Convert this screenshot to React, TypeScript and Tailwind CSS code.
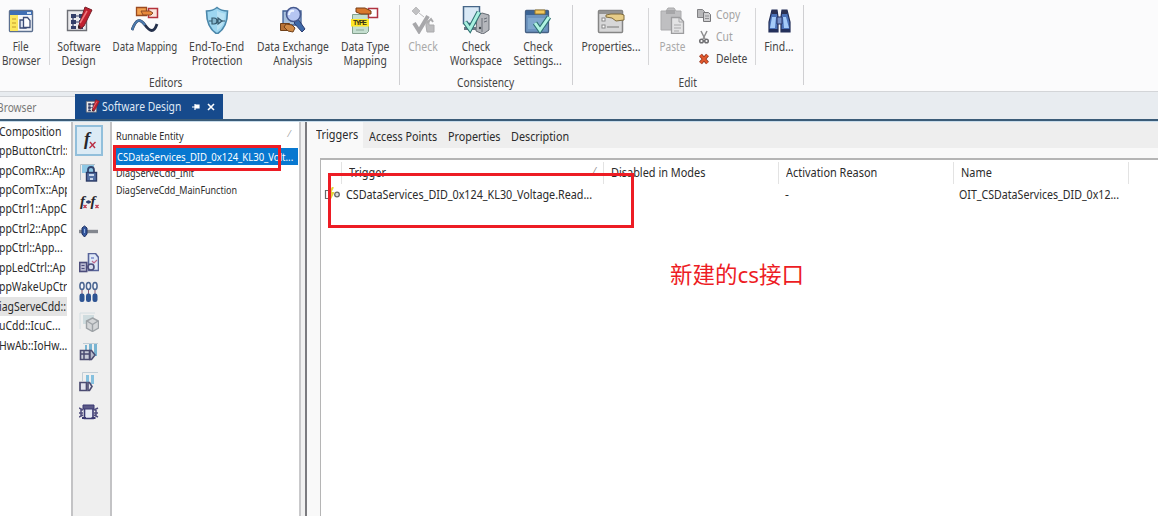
import type { ReactNode } from "react";

function Svg({ children, size = 28 }: { children: ReactNode; size?: number }) {
  return (
    <svg width={size} height={size} viewBox={`0 0 ${size} ${size}`} fill="none" className="block shrink-0">
      {children}
    </svg>
  );
}

/* ---------- ribbon icons ---------- */

const FileBrowserIcon = () => (
  <Svg>
    <rect x="2.500" y="4.500" width="23" height="21" rx="1" fill="#f4f6fa" stroke="#5b6f8f" strokeWidth="1.400" />
    <rect x="3" y="5" width="22" height="4" fill="#3f6fb4" />
    <rect x="20" y="6" width="4" height="2" fill="#cfe0f5" />
    <rect x="3" y="9" width="8" height="16" fill="#fbe75f" />
    <path d="M5 13h4M5 17h4M5 21h4" stroke="#c29a2a" strokeWidth="1.200" />
    <path d="M13 14h6v8h-6z" fill="#dfe6f3" stroke="#3c4d78" strokeWidth="1.300" />
    <path d="M16.500 11.500h4l2.500 3v7h-6.500z" fill="#fff" stroke="#3c4d78" strokeWidth="1.300" />
  </Svg>
);

const SoftwareDesignIcon = ({ small = false }: { small?: boolean }) => (
  <svg width={small ? 15 : 28} height={small ? 15 : 28} viewBox="0 0 28 28" className="block shrink-0">
    <path d="M2.500 4.500h19v20h-19z" fill="#e9e9ec" stroke="#6d6f76" strokeWidth="1.400" />
    <path d="M6 8h5v4H6zM14 8h4v4h-4zM6 14h5v4H6zM14 14h4v4h-4zM6 20h5v3H6zM14 20h4v3h-4z" fill="#323e68" />
    <path d="M11 10h4M11 16h4M8 12v9M16 12v9" stroke="#323e68" strokeWidth="1.200" />
    <path d="M20 1l7 3-8 16-4 3-1-4z" fill="#c1202f" stroke="#77202a" />
    <path d="M22 5l-7 12" stroke="#f07a7f" strokeWidth="1.500" />
    <path d="M13 19l3 2-3 2z" fill="#3a2020" />
  </svg>
);

const DataMappingIcon = () => (
  <Svg>
    <path d="M5.500 1.500h10v8h-10z" fill="#f3a14f" stroke="#9b4a1f" strokeWidth="1.300" />
    <path d="M17.500 2.500h9v9h-9z" fill="#fbe5dc" stroke="#b4323c" strokeWidth="1.500" />
    <path d="M10 5h9l3 2-2 2h-8z" fill="#e7883c" stroke="#8c4a26" />
    <path d="M1 24C5 13 9 12 14 19s9 8 12-1" stroke="#24304b" strokeWidth="2.800" />
    <path d="M1 24C5 13 9 12 14 19" stroke="#4b79ac" strokeWidth="2.200" />
  </Svg>
);

const ShieldIcon = () => (
  <Svg>
    <path d="M14 1.500c3 2.500 7 3.500 10.500 3.500 0 10-2 18-10.500 23C5.500 23 3.500 15 3.500 5 7 5 11 4 14 1.500z" fill="#9dd6f0" stroke="#4b87aa" strokeWidth="1.600" />
    <path d="M14 4.500c2.500 1.800 5 2.700 8 3-.3 8-2.500 13.500-8 17z" fill="#b9e2f4" />
    <path d="M6 15h3M19 15h3" stroke="#35596d" />
    <path d="M9 12h2a3 3 0 010 6H9zM15 12l4 3-4 3z" fill="#86b8cf" stroke="#35596d" strokeWidth="1.200" />
  </Svg>
);

const DataExchangeIcon = () => (
  <Svg>
    <path d="M4 5h18v14H4z" fill="#a9c1dc" stroke="#3f5f94" strokeWidth="1.300" />
    <path d="M19 13l7 10-3 3-8-9z" fill="#3e69a8" stroke="#2c3c70" />
    <circle cx="14.500" cy="8.500" r="7" fill="#b6c6f2" stroke="#46598f" strokeWidth="1.600" />
    <path d="M10 9c0-3 2-5 5-4" stroke="#edf4ff" strokeWidth="2" />
    <path d="M1.500 17.500h9v7h-9z" fill="#b87236" stroke="#704019" />
    <path d="M7 18l6 1 3 3-2 4-5-1-4-4z" fill="#d18a45" stroke="#704019" />
  </Svg>
);

const DataTypeIcon = () => (
  <Svg>
    <path d="M1.500 8.500h16v17l-2 2h-14z" fill="#c5dfd0" stroke="#83a08d" />
    <path d="M17.500 2.500h9v9h-9z" fill="#fff" stroke="#b03341" strokeWidth="1.500" />
    <path d="M5 2h9l6 3v3h-10L5 6z" fill="#d9782c" stroke="#773d17" />
    <rect x="0" y="13" width="18" height="7.500" fill="#ffe827" />
    <text x="2" y="19.200" textLength="14" fontFamily="Liberation Sans" fontWeight="700" fontSize="7" fill="#3a3413">TYPE</text>
    <path d="M5 24h8" stroke="#8ba897" />
  </Svg>
);

const CheckIcon = () => (
  <Svg>
    <path d="M7 1l4 4-4 4-4-4zM10 7l5 4" fill="#c1c1c3" stroke="#bcbcbe" />
    <path d="M5 17l5 8 9-15" stroke="#a7a7aa" strokeWidth="4" />
    <path d="M17 20v-5h3v4h5v7h-7z" fill="#bcbcbe" stroke="#aaaaac" />
    <path d="M18 17l4-4 2 3" stroke="#ababad" strokeWidth="2" />
  </Svg>
);

const CheckWorkspaceIcon = () => (
  <Svg>
    <path d="M1.500 .500h16v17h-16z" fill="#d9e9f6" stroke="#466688" strokeWidth="1.500" />
    <path d="M2 21h12v3H2z" fill="#6d7785" />
    <path d="M15 10l5-3 7 2v15l-6 4-7-3z" fill="#b4b7bc" stroke="#676c74" />
    <path d="M20 12v14M22 13l3-1M22 16l3-1" stroke="#6a7079" />
    <circle cx="18" cy="22" r="1.200" fill="#43494f" />
    <path d="M3 16l5 7L17 6" stroke="#2d6f71" strokeWidth="5" />
    <path d="M3 16l5 7L17 6" stroke="#a8f0df" strokeWidth="3" />
  </Svg>
);

const CheckSettingsIcon = () => (
  <Svg>
    <rect x="1.500" y="4.500" width="23" height="22" rx="1" fill="#6d94c0" stroke="#466083" strokeWidth="1.300" />
    <path d="M2 5h22v4H2z" fill="#3b6495" />
    <path d="M11 4h10v4H11z" fill="#f1c75f" stroke="#96782f" />
    <path d="M4 12h17v11H4z" fill="#7fa8ce" />
    <path d="M11 17l5 7L25 11" stroke="#2d7272" strokeWidth="5" />
    <path d="M11 17l5 7L25 11" stroke="#b0f3e1" strokeWidth="3" />
  </Svg>
);

const PropertiesIcon = () => (
  <Svg>
    <rect x="1.500" y="4.500" width="24" height="22" rx="1" fill="#d7d7d8" stroke="#858585" strokeWidth="1.500" />
    <path d="M2 5h23v3H2z" fill="#939393" />
    <rect x="5" y="12" width="3" height="3" fill="#fff" stroke="#888" />
    <rect x="5" y="19" width="3" height="3" fill="#fff" stroke="#888" />
    <path d="M10 21h12" stroke="#999" strokeWidth="1.500" />
    <path d="M9 9l5-1h10l3 1v5l-8 1-4-3-6-1z" fill="#e7cd88" stroke="#7e6b3d" />
  </Svg>
);

const PasteIcon = () => (
  <Svg>
    <path d="M3 5h5l2-3h6l2 3h5v19H3z" fill="#bfbfc1" stroke="#ababad" strokeLinejoin="round" />
    <path d="M8 4h9v4H8z" fill="#a6a6a8" />
    <path d="M13.500 11.500h8l4 4v12h-12z" fill="#e3e3e4" stroke="#9d9d9f" strokeWidth="1.300" />
    <path d="M21 12v4h4M16 19h7M16 22h7M16 25h5" stroke="#a9a9ab" />
  </Svg>
);

const FindIcon = () => (
  <Svg>
    <path d="M7 4h5l1 7v15H4V16zM17 4h5l3 12v10h-9V11z" fill="#4a71b8" stroke="#222d56" strokeWidth="1.200" />
    <path d="M12 11h5v7h-5z" fill="#7891c8" stroke="#283566" />
    <path d="M7 4h5v4H7zM17 4h5v4h-5z" fill="#2b3153" />
    <path d="M7 11l-2 11h5l1-11zM18 11l1 11h5l-3-11z" fill="#a5cbf8" />
    <path d="M4 23h9v3H4zM16 23h9v3h-9z" fill="#24305b" />
  </Svg>
);

const CopyIcon = () => (
  <Svg size={14}>
    <path d="M.500 1.500h5l2 2v6h-7z" fill="#b8b8ba" stroke="#818184" />
    <path d="M6.500 4.500h5l2 2v7h-7z" fill="#d0d0d2" stroke="#77777a" />
    <path d="M8 8h4M8 10.500h4" stroke="#909093" />
  </Svg>
);

const CutIcon = () => (
  <Svg size={14}>
    <path d="M4 1l4 8M10 1L6 9" stroke="#8e8e90" strokeWidth="1.500" />
    <circle cx="4.500" cy="11" r="1.800" stroke="#6f6f72" strokeWidth="1.500" />
    <circle cx="9.500" cy="11" r="1.800" stroke="#6f6f72" strokeWidth="1.500" />
  </Svg>
);

const DeleteIcon = () => (
  <Svg size={14}>
    <path d="M3.500 3l7 8M10.500 3l-7 8" stroke="#8d3520" strokeWidth="3.800" />
    <path d="M3.500 3l7 8M10.500 3l-7 8" stroke="#e2592d" strokeWidth="2.200" />
  </Svg>
);

/* ---------- side toolbar icons ---------- */

const FxIcon = () => (
  <Svg size={20}>
    <text x="5" y="14" fontFamily="Liberation Serif" fontStyle="italic" fontWeight="700" fontSize="18" fill="#26262c">f</text>
    <path d="M11 11l5 6M16.500 11l-6 6" stroke="#b92e43" strokeWidth="1.400" />
  </Svg>
);

const LockIcon = () => (
  <Svg size={20}>
    <path d="M1.500 17V1.500H16" stroke="#b4c0c8" />
    <path d="M3 2h12v8H3z" fill="#8ec8e5" />
    <path d="M9 10V7a3 3 0 016 0v3" stroke="#34456f" strokeWidth="1.800" />
    <rect x="7.500" y="9.500" width="10" height="8.500" fill="#5471a4" stroke="#2c3b66" strokeWidth="1.400" />
    <path d="M10 11h5v2h-5zM11 15h3v2h-3z" fill="#c9d7ec" />
  </Svg>
);

const FxFxIcon = () => (
  <Svg size={20}>
    <g fontFamily="Liberation Serif" fontStyle="italic" fontWeight="700" fontSize="15" fill="#26262c">
      <text x="1" y="13">f</text>
      <text x="11.500" y="13">f</text>
    </g>
    <path d="M4.500 12l3 3M7.500 12l-3 3M16.500 12l3 3M19.500 12l-3 3" stroke="#b92e43" strokeWidth="1.200" />
    <path d="M7 9h5" stroke="#30416f" strokeWidth="1.500" />
    <circle cx="9.500" cy="9" r="1.800" fill="#30416f" />
  </Svg>
);

const SliderIcon = () => (
  <Svg size={20}>
    <path d="M0 8.500h19" stroke="#83878f" strokeWidth="3.400" />
    <path d="M3 5l2.500-2L8 5v6l-2.500 3L3 11z" fill="#3559a0" stroke="#1c2e61" />
    <path d="M5.500 6v4" stroke="#93b0e0" />
  </Svg>
);

const PortDocIcon = () => (
  <Svg size={20}>
    <path d="M9.500.500h7l3 4v13h-10z" fill="#dfe8f7" stroke="#58649a" strokeWidth="1.600" />
    <path d="M12 5h3" stroke="#7c8ccc" strokeWidth="1.500" />
    <path d="M13 8l2 2 3-3" stroke="#c06a8c" strokeWidth="1.200" />
    <rect x=".700" y="9.500" width="7" height="9" fill="#b9b9d0" stroke="#4c4d7b" strokeWidth="1.600" />
    <path d="M2.500 12.500h3M2.500 15.500h3" stroke="#4c4d7b" />
    <circle cx="12" cy="14" r="3" fill="#d8ddec" stroke="#4c4d7b" strokeWidth="1.600" />
    <path d="M7 14h2" stroke="#4c4d7b" />
  </Svg>
);

const PinsIcon = () => (
  <svg width="20" height="24" viewBox="0 0 20 24" fill="none" className="block shrink-0">
    <g stroke="#4a6590" strokeWidth="1.500" fill="#f2f5fa">
      <ellipse cx="3" cy="5" rx="2.100" ry="3.600" />
      <ellipse cx="9.500" cy="5" rx="2.100" ry="3.600" />
      <ellipse cx="16" cy="5" rx="2.100" ry="3.600" />
    </g>
    <path d="M3 9v5M9.500 9v5M16 9v5" stroke="#8d5873" />
    <g fill="#2e5493">
      <rect x=".500" y="12.500" width="5" height="8.500" rx="2.200" />
      <rect x="7" y="12.500" width="5" height="8.500" rx="2.200" />
      <rect x="13.500" y="12.500" width="5" height="8.500" rx="2.200" />
    </g>
  </svg>
);

const CubeIcon = () => (
  <Svg size={20}>
    <path d="M1 17V1h15" stroke="#d4dee2" />
    <path d="M4 3h11v9H4z" fill="#cfdcdf" />
    <path d="M13.500 6l6 3v7l-6 3.500-6-3.500V9z" fill="#d4d6d8" stroke="#9da2a6" strokeWidth="1.400" />
    <path d="M8 9l5.500 3.500L19 9M13.500 12.500V19" stroke="#9da2a6" strokeWidth="1.400" />
  </Svg>
);

const PortsAIcon = () => (
  <Svg size={20}>
    <path d="M4 1.500h15" stroke="#c2cdd5" />
    <path d="M6 3h2v8H6zM10 2h3v9h-3zM15 2h3v12h-3z" fill="#79b4d2" />
    <path d="M1.500 8.500h9v9h-9z" fill="#c9cbd8" stroke="#4b4b71" strokeWidth="1.600" />
    <path d="M5 9v8M2 12h8M11 8.500h1.500l3.500 4.500-3.500 4.500H11z" fill="#b9bccd" stroke="#4b4b71" strokeWidth="1.500" />
  </Svg>
);

const PortsBIcon = () => (
  <Svg size={20}>
    <path d="M3.500 9V.500H19" stroke="#c2cdd5" />
    <path d="M7 3h3v7H7zM12 3h3v9h-3z" fill="#85c0de" />
    <path d="M1 10.500h6.500v8H1z" fill="#e2e2ec" stroke="#4b4b71" strokeWidth="1.700" />
    <path d="M9 10.500h1.500l2.500 4-2.500 4H9z" fill="#e5e6ee" stroke="#4b4b71" strokeWidth="1.600" />
  </Svg>
);

const ChipIcon = () => (
  <Svg size={20}>
    <path d="M0 6l4 2M0 11h4M0 15l4-2M19 6l-4 2M19 11h-4M19 15l-4-2M2 7v8M17 7v8" stroke="#504d7e" strokeWidth="1.500" />
    <path d="M5.500 4.500h8.500v12h-8.500z" fill="#e8ebf5" stroke="#3b3972" strokeWidth="1.600" />
    <path d="M4 3h11v4H4z" fill="#5b5987" stroke="#3b3972" />
    <path d="M3 16h4M12.500 16h4" stroke="#3b3972" strokeWidth="2" />
  </Svg>
);

/* ---------- ribbon ---------- */

function RibbonButton({
  icon,
  lines,
  width,
  muted = false,
  squeeze = "scale-x-[0.87]",
}: {
  icon: ReactNode;
  lines: string[];
  width: string;
  muted?: boolean;
  squeeze?: string;
}) {
  return (
    <div className={`flex shrink-0 flex-col items-center pt-[6px] ${width} ${muted ? "text-[#a9a9a9]" : "text-[#444]"}`}>
      {icon}
      <div className="mt-[6px] flex flex-col items-center leading-[14px]">
        {lines.map((l) => (
          <span key={l} className={`${squeeze} whitespace-nowrap`}>{l}</span>
        ))}
      </div>
    </div>
  );
}

const ShortRule = () => <div className="mt-2 h-[57px] w-px shrink-0 bg-[#d6d6d8]" />;
const TallRule = () => <div className="mt-[5px] h-[80px] w-px shrink-0 bg-[#cfcfd2]" />;

function Group({ label, width, labelPad = "", children }: { label: string; width: string; labelPad?: string; children: ReactNode }) {
  return (
    <div className={`flex shrink-0 flex-col ${width}`}>
      <div className="flex h-[75px]">{children}</div>
      <div className={`flex justify-center leading-4 text-[#444] ${labelPad}`}>
        <span className="scale-x-[0.85] whitespace-nowrap">{label}</span>
      </div>
    </div>
  );
}

function SmallCommand({ icon, label, muted = false }: { icon: ReactNode; label: string; muted?: boolean }) {
  return (
    <div className={`flex h-[22px] items-center gap-[5px] ${muted ? "text-[#a3a3a3]" : "text-[#444]"}`}>
      {icon}
      <span className="origin-left scale-x-[0.86]">{label}</span>
    </div>
  );
}

function Ribbon() {
  return (
    <div className="flex h-[92px] shrink-0 border-b border-[#d3d5d8] bg-[#fbfbfc]">
      <Group label="Editors" width="w-[399px]" labelPad="pr-[67px]">
        <RibbonButton icon={<FileBrowserIcon />} lines={["File", "Browser"]} width="w-[42px]" squeeze="scale-x-[0.83]" />
        <div className="w-[7px]" />
        <ShortRule />
        <RibbonButton icon={<SoftwareDesignIcon />} lines={["Software", "Design"]} width="w-[58px]" />
        <RibbonButton icon={<DataMappingIcon />} lines={["Data Mapping"]} width="w-[74px]" squeeze="scale-x-[0.81]" />
        <RibbonButton icon={<ShieldIcon />} lines={["End-To-End", "Protection"]} width="w-[70px]" />
        <RibbonButton icon={<DataExchangeIcon />} lines={["Data Exchange", "Analysis"]} width="w-[82px]" squeeze="scale-x-[0.855]" />
        <RibbonButton icon={<DataTypeIcon />} lines={["Data Type", "Mapping"]} width="w-[62px]" squeeze="scale-x-[0.86]" />
      </Group>
      <TallRule />
      <Group label="Consistency" width="w-[172px]">
        <RibbonButton icon={<CheckIcon />} lines={["Check"]} width="w-[46px]" muted />
        <RibbonButton icon={<CheckWorkspaceIcon />} lines={["Check", "Workspace"]} width="w-[60px]" squeeze="scale-x-[0.84]" />
        <RibbonButton icon={<CheckSettingsIcon />} lines={["Check", "Settings..."]} width="w-[64px]" />
      </Group>
      <TallRule />
      <Group label="Edit" width="w-[230px]">
        <RibbonButton icon={<PropertiesIcon />} lines={["Properties..."]} width="w-[75px]" />
        <ShortRule />
        <RibbonButton icon={<PasteIcon />} lines={["Paste"]} width="w-[46px]" muted squeeze="scale-x-[0.84]" />
        <div className="flex w-[60px] flex-col pt-[4px] pl-[2px]">
          <SmallCommand icon={<CopyIcon />} label="Copy" muted />
          <SmallCommand icon={<CutIcon />} label="Cut" muted />
          <SmallCommand icon={<DeleteIcon />} label="Delete" />
        </div>
        <ShortRule />
        <RibbonButton icon={<FindIcon />} lines={["Find..."]} width="w-[46px]" />
      </Group>
      <TallRule />
    </div>
  );
}

/* ---------- panels ---------- */

const components = [
  "Composition",
  "ppButtonCtrl::",
  "ppComRx::Ap",
  "ppComTx::App",
  "ppCtrl1::AppC",
  "ppCtrl2::AppC",
  "ppCtrl::App...",
  "ppLedCtrl::Ap",
  "ppWakeUpCtr",
  "iagServeCdd::",
  "uCdd::IcuC...",
  "HwAb::IoHw...",
];

const tools = [LockIcon, FxFxIcon, SliderIcon, PortDocIcon, PinsIcon, CubeIcon, PortsAIcon, PortsBIcon, ChipIcon];

function ComponentTree() {
  return (
    <div className="w-[71px] shrink-0 overflow-hidden bg-white">
      <div className="w-[67px] overflow-hidden">
        {components.map((c) => (
          <div key={c} className={`flex h-[19.45px] items-center ${c.startsWith("iag") ? "bg-[#e4e4e4]" : ""}`}>
            <span className="origin-left -translate-x-px scale-x-[0.87] whitespace-nowrap">{c}</span>
          </div>
        ))}
      </div>
    </div>
  );
}

function SideTools() {
  return (
    <div className="flex w-[41px] shrink-0 flex-col items-center border-x-2 border-[#c3c3c5] bg-[#efefef] pt-[3px] pr-[6px]">
      <div className="flex h-[31px] w-[28px] shrink-0 items-center justify-center border-2 border-[#92bfdb] bg-[#dcebf5]">
        <FxIcon />
      </div>
      <div className="mt-[2px] flex flex-col">
        {tools.map((Tool, i) => (
          <div key={i} className="flex h-[29.9px] items-center justify-center">
            <Tool />
          </div>
        ))}
      </div>
    </div>
  );
}

function EntityList() {
  return (
    <div className="flex w-[187px] shrink-0 flex-col bg-white pr-px pl-[3px] text-[11px]">
      <div className="flex h-[26px] items-center justify-between pt-[2px] pr-2 pl-[1px]">
        <span className="origin-left scale-x-[0.83] whitespace-nowrap">Runnable Entity</span>
        <span className="pb-1 text-[9px] text-[#999]">⁄</span>
      </div>
      <div className="flex h-[17px] items-center bg-[#0878d0] pl-[2px] text-white">
        <span className="origin-left scale-x-[0.866] whitespace-nowrap">CSDataServices_DID_0x124_KL30_Volt...</span>
      </div>
      <div className="flex h-[16px] items-center pl-[1px]">
        <span className="origin-left scale-x-[0.82] whitespace-nowrap">DiagServeCdd_Init</span>
      </div>
      <div className="flex h-[17px] items-center pl-[1px]">
        <span className="origin-left scale-x-[0.815] whitespace-nowrap">DiagServeCdd_MainFunction</span>
      </div>
    </div>
  );
}

function HeaderCell({ label, width, sorted = false }: { label: string; width: string; sorted?: boolean }) {
  return (
    <div className={`flex h-[22px] shrink-0 items-center justify-between border-r border-[#e3e3e3] pr-[8px] pl-[7px] ${width}`}>
      <span className="origin-left scale-x-[0.91] whitespace-nowrap">{label}</span>
      {sorted && <span className="pb-1 text-[10px] text-[#888]">⁄</span>}
    </div>
  );
}

function TriggerPanel() {
  return (
    <div className="flex min-w-0 grow flex-col bg-[#f9f9f9]">
      <div className="flex h-[26px] shrink-0 bg-[#eeeeee]">
        <div className="flex w-[56px] items-center bg-[#f9f9f9] pb-px pl-[9px]">
          <span className="origin-left scale-x-[0.91]">Triggers</span>
        </div>
        <div className="flex w-[79px] items-center pt-[3px] pl-[6px]">
          <span className="origin-left scale-x-[0.9] whitespace-nowrap">Access Points</span>
        </div>
        <div className="flex w-[63px] items-center pt-[3px] pl-[6px]">
          <span className="origin-left scale-x-[0.9]">Properties</span>
        </div>
        <div className="flex items-center pt-[3px] pl-[6px]">
          <span className="origin-left scale-x-[0.9]">Description</span>
        </div>
      </div>
      <div className="mt-[10px] ml-[13px] flex grow flex-col border-t-2 border-l border-[#b5b5b5] bg-white">
        <div className="flex h-[26px] items-center">
          <div className="h-[22px] w-[21px] shrink-0 border-r border-[#e3e3e3]" />
          <HeaderCell label="Trigger" width="w-[262px]" sorted />
          <HeaderCell label="Disabled in Modes" width="w-[175px]" />
          <HeaderCell label="Activation Reason" width="w-[175px]" />
          <HeaderCell label="Name" width="w-[175px]" />
        </div>
        <div className="flex h-[18px] items-center">
          <div className="w-[25px] shrink-0 pl-[3px]">
            <svg width="17" height="16" viewBox="0 0 17 16" fill="none" className="block">
              <path d="M1.500 3.500h2a3 4 0 010 8h-2z" stroke="#686868" strokeWidth="1.200" />
              <path d="M9 0L6 6h3l-3 6" stroke="#e3d33b" strokeWidth="2" />
              <circle cx="13" cy="7.500" r="2.300" fill="#ddd" stroke="#666" strokeWidth="1.300" />
            </svg>
          </div>
          <div className="w-[439px] shrink-0">
            <span className="inline-block origin-left scale-x-[0.897] whitespace-nowrap">CSDataServices_DID_0x124_KL30_Voltage.Read...</span>
          </div>
          <div className="w-[174px] shrink-0">-</div>
          <span className="origin-left scale-x-[0.885] whitespace-nowrap">OIT_CSDataServices_DID_0x12...</span>
        </div>
      </div>
    </div>
  );
}

function TabStrip() {
  return (
    <div className="flex h-[27px] shrink-0 items-end bg-[#e8ecf0]">
      <div className="flex h-[23px] w-[75px] items-center border-t border-[#cfd2d6] bg-[#f7f7f8] text-[#777]">
        <span className="origin-left -translate-x-[3px] scale-x-[0.85]">Browser</span>
      </div>
      <div className="flex h-[25px] w-[148px] items-center bg-[#164a8c] pl-[10px] text-[#dfe8f5]">
        <SoftwareDesignIcon small />
        <span className="ml-[2px] w-[90px] origin-left scale-x-[0.86] whitespace-nowrap">Software Design</span>
        <svg width="8" height="8" viewBox="0 0 8 8" className="mr-[7px] block shrink-0">
          <path d="M0 4h3M3 1v6M3 2h4v3H3z" stroke="#fff" strokeWidth="1.200" fill="#fff" />
        </svg>
        <svg width="8" height="8" viewBox="0 0 8 8" className="block shrink-0">
          <path d="M1 1l6 6M7 1L1 7" stroke="#fff" strokeWidth="1.600" />
        </svg>
      </div>
    </div>
  );
}

export default function App() {
  return (
    <div className="relative flex h-[516px] w-[1158px] flex-col overflow-hidden bg-white font-['Noto_Sans',sans-serif] text-[12px] leading-4 text-[#2b2b2b]">
      <Ribbon />
      <TabStrip />
      <div className="h-[3px] shrink-0 border-b border-[#c8dceb] bg-[#3b5c78]" />
      <div className="flex min-h-0 grow">
        <ComponentTree />
        <SideTools />
        <EntityList />
        <div className="w-[8px] shrink-0 border-x-2 border-r-[#7b7b7f] border-l-[#c9c9cb] bg-[#f1f1f1]" />
        <TriggerPanel />
      </div>

      <div className="absolute top-[145px] left-[113px] h-[26px] w-[168px] border-3 border-[#ed1c24]" />
      <div className="absolute top-[173px] left-[328px] h-[55px] w-[306px] border-3 border-[#ed1c24]" />
      <div className="absolute top-[260px] left-[670px] font-['Noto_Sans','Noto_Sans_CJK_SC',sans-serif] text-[22.5px] leading-[30px] whitespace-nowrap text-[#ed1c24]">
        新建的cs接口
      </div>
    </div>
  );
}
